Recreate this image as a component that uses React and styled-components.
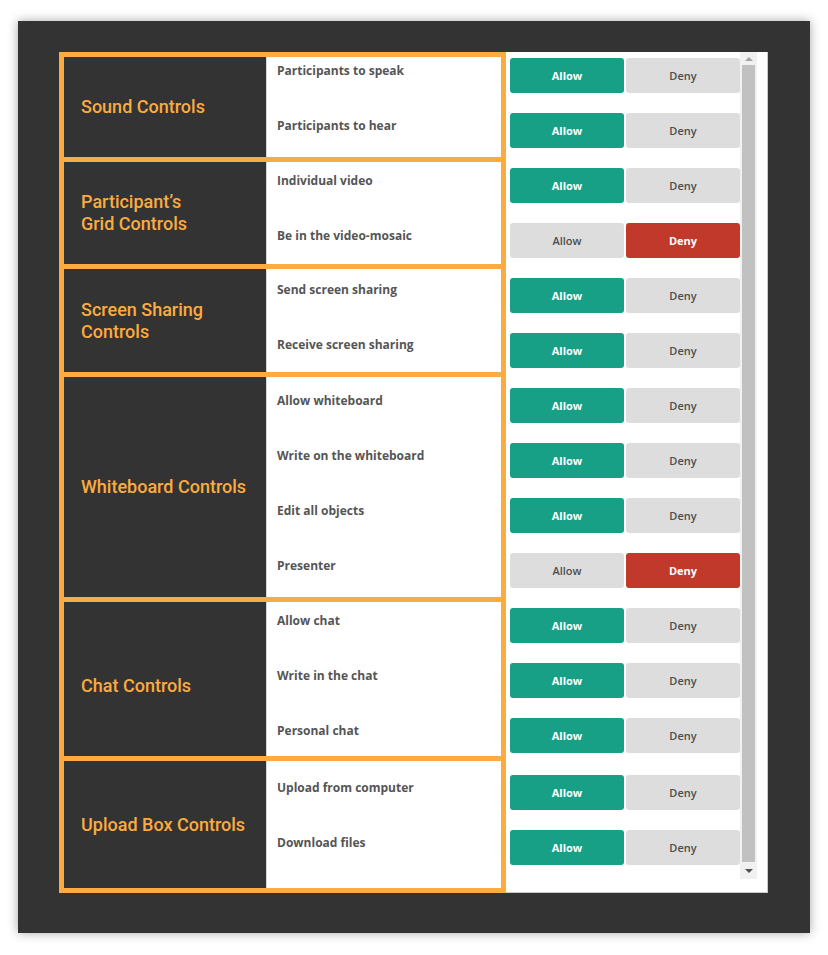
import React from "react";
import styled, { createGlobalStyle } from "styled-components";

const GlobalStyle = createGlobalStyle`
  html, body { margin: 0; padding: 0; background: #ffffff; }
  body { font-family: "Open Sans", "Liberation Sans", sans-serif; }
  * { box-sizing: border-box; }
`;

const ORANGE = "#fbab40";

const Frame = styled.div`
  margin: 21px 18px;
  width: 792px;
  height: 912px;
  background: #333333;
  box-shadow: 0 0 10px rgba(0, 0, 0, 0.35);
  padding: 31px 0 0 41px;
  display: flex;
  align-items: flex-start;
`;

const Table = styled.div`
  width: 447px;
  border: 5px solid ${ORANGE};
  display: flex;
  flex-direction: column;
  background: ${ORANGE};
  gap: 5px;
`;

const Section = styled.div`
  display: grid;
  grid-template-columns: 202px 1fr;
  grid-template-rows: ${(p) => p.$h}px;
  height: ${(p) => p.$h}px;
  flex: none;
  overflow: hidden;
`;

const TitleCell = styled.div`
  background: #333333;
  display: flex;
  align-items: center;
  padding: ${(p) => p.$shift || 0}px 10px 0 17px;
  color: ${ORANGE};
  font-family: Roboto, "Liberation Sans", sans-serif;
  font-weight: 500;
  font-size: 18px;
  line-height: 22px;
`;

const LabelCell = styled.div`
  background: #ffffff;
  border-left: 1px solid #d6d6d6;
  padding: ${(p) => p.$pt}px 0 0 10px;
  display: flex;
  flex-direction: column;
  min-height: 0;
  overflow: hidden;
`;

const Label = styled.div`
  height: 55px;
  flex: none;
  font-family: "Open Sans", "Liberation Sans", sans-serif;
  font-weight: 700;
  font-size: 12px;
  line-height: 16px;
  color: #555555;
`;

const Panel = styled.div`
  width: 262px;
  height: 841px;
  background: #ffffff;
  border-right: 1px solid #c9c9c9;
  border-bottom: 1px solid #c9c9c9;
  display: flex;
  padding: 0 10px 13px 4px;
`;

const List = styled.div`
  width: 230px;
  padding-top: 6px;
  display: flex;
  flex-direction: column;
`;

const Group = styled.div`
  margin-top: ${(p) => p.$mt || 0}px;
  display: flex;
  flex-direction: column;
`;

const ButtonRow = styled.div`
  height: 55px;
  display: flex;
  gap: 2px;
`;

const Btn = styled.div`
  width: 114px;
  height: 35px;
  border-radius: 3px;
  display: flex;
  align-items: center;
  justify-content: center;
  font-family: "Open Sans", "Liberation Sans", sans-serif;
  font-size: 11px;
  font-weight: ${(p) => (p.$tone === "off" ? 600 : 700)};
  color: ${(p) => (p.$tone === "off" ? "#4d4d4d" : "#ffffff")};
  background: ${(p) =>
    p.$tone === "allow" ? "#17a086" : p.$tone === "deny" ? "#c0392b" : "#dddddd"};
`;

const Scrollbar = styled.div`
  width: 17px;
  background: #f1f1f1;
  display: flex;
  flex-direction: column;
  align-items: center;
`;

const Arrow = styled.div`
  height: ${(p) => p.$h}px;
  width: 100%;
  display: flex;
  align-items: center;
  justify-content: center;
  &::after {
    content: "";
    border-left: 4px solid transparent;
    border-right: 4px solid transparent;
    ${(p) => (p.$up ? "border-bottom" : "border-top")}: 4px solid ${(p) =>
      p.$up ? "#a3a3a3" : "#505050"};
  }
`;

const Thumb = styled.div`
  flex: 1;
  width: 13px;
  background: #c1c1c1;
`;

const sections = [
  { title: "Sound Controls", h: 100, pt: 6, rows: [["Participants to speak", "allow"], ["Participants to hear", "allow"]] },
  { title: ["Participant’s", "Grid Controls"], h: 102, pt: 11, rows: [["Individual video", "allow"], ["Be in the video-mosaic", "deny"]] },
  { title: ["Screen Sharing", "Controls"], h: 103, pt: 13, rows: [["Send screen sharing", "allow"], ["Receive screen sharing", "allow"]] },
  {
    title: "Whiteboard Controls", h: 220, pt: 16,
    rows: [["Allow whiteboard", "allow"], ["Write on the whiteboard", "allow"], ["Edit all objects", "allow"], ["Presenter", "deny"]],
  },
  { title: "Chat Controls", h: 154, pt: 11, shift: 14, rows: [["Allow chat", "allow"], ["Write in the chat", "allow"], ["Personal chat", "allow"]] },
  { title: "Upload Box Controls", h: 127, pt: 19, mt: 2, rows: [["Upload from computer", "allow"], ["Download files", "allow"]] },
];

function Title({ t, shift }) {
  if (Array.isArray(t)) {
    return (
      <TitleCell $shift={shift}>
        <span>
          {t[0]}
          <br />
          {t[1]}
        </span>
      </TitleCell>
    );
  }
  return <TitleCell $shift={shift}>{t}</TitleCell>;
}

export default function App() {
  return (
    <>
      <GlobalStyle />
      <Frame>
        <Table>
          {sections.map((s, i) => (
            <Section key={i} $h={s.h}>
              <Title t={s.title} shift={s.shift} />
              <LabelCell $pt={s.pt}>
                {s.rows.map(([label]) => (
                  <Label key={label}>{label}</Label>
                ))}
              </LabelCell>
            </Section>
          ))}
        </Table>
        <Panel>
          <List>
            {sections.map((s, i) => (
              <Group key={i} $mt={s.mt}>
                {s.rows.map(([label, state]) => (
                  <ButtonRow key={label}>
                    <Btn $tone={state === "allow" ? "allow" : "off"}>Allow</Btn>
                    <Btn $tone={state === "deny" ? "deny" : "off"}>Deny</Btn>
                  </ButtonRow>
                ))}
              </Group>
            ))}
          </List>
          <Scrollbar>
            <Arrow $up $h={13} />
            <Thumb />
            <Arrow $h={17} />
          </Scrollbar>
        </Panel>
      </Frame>
    </>
  );
}
